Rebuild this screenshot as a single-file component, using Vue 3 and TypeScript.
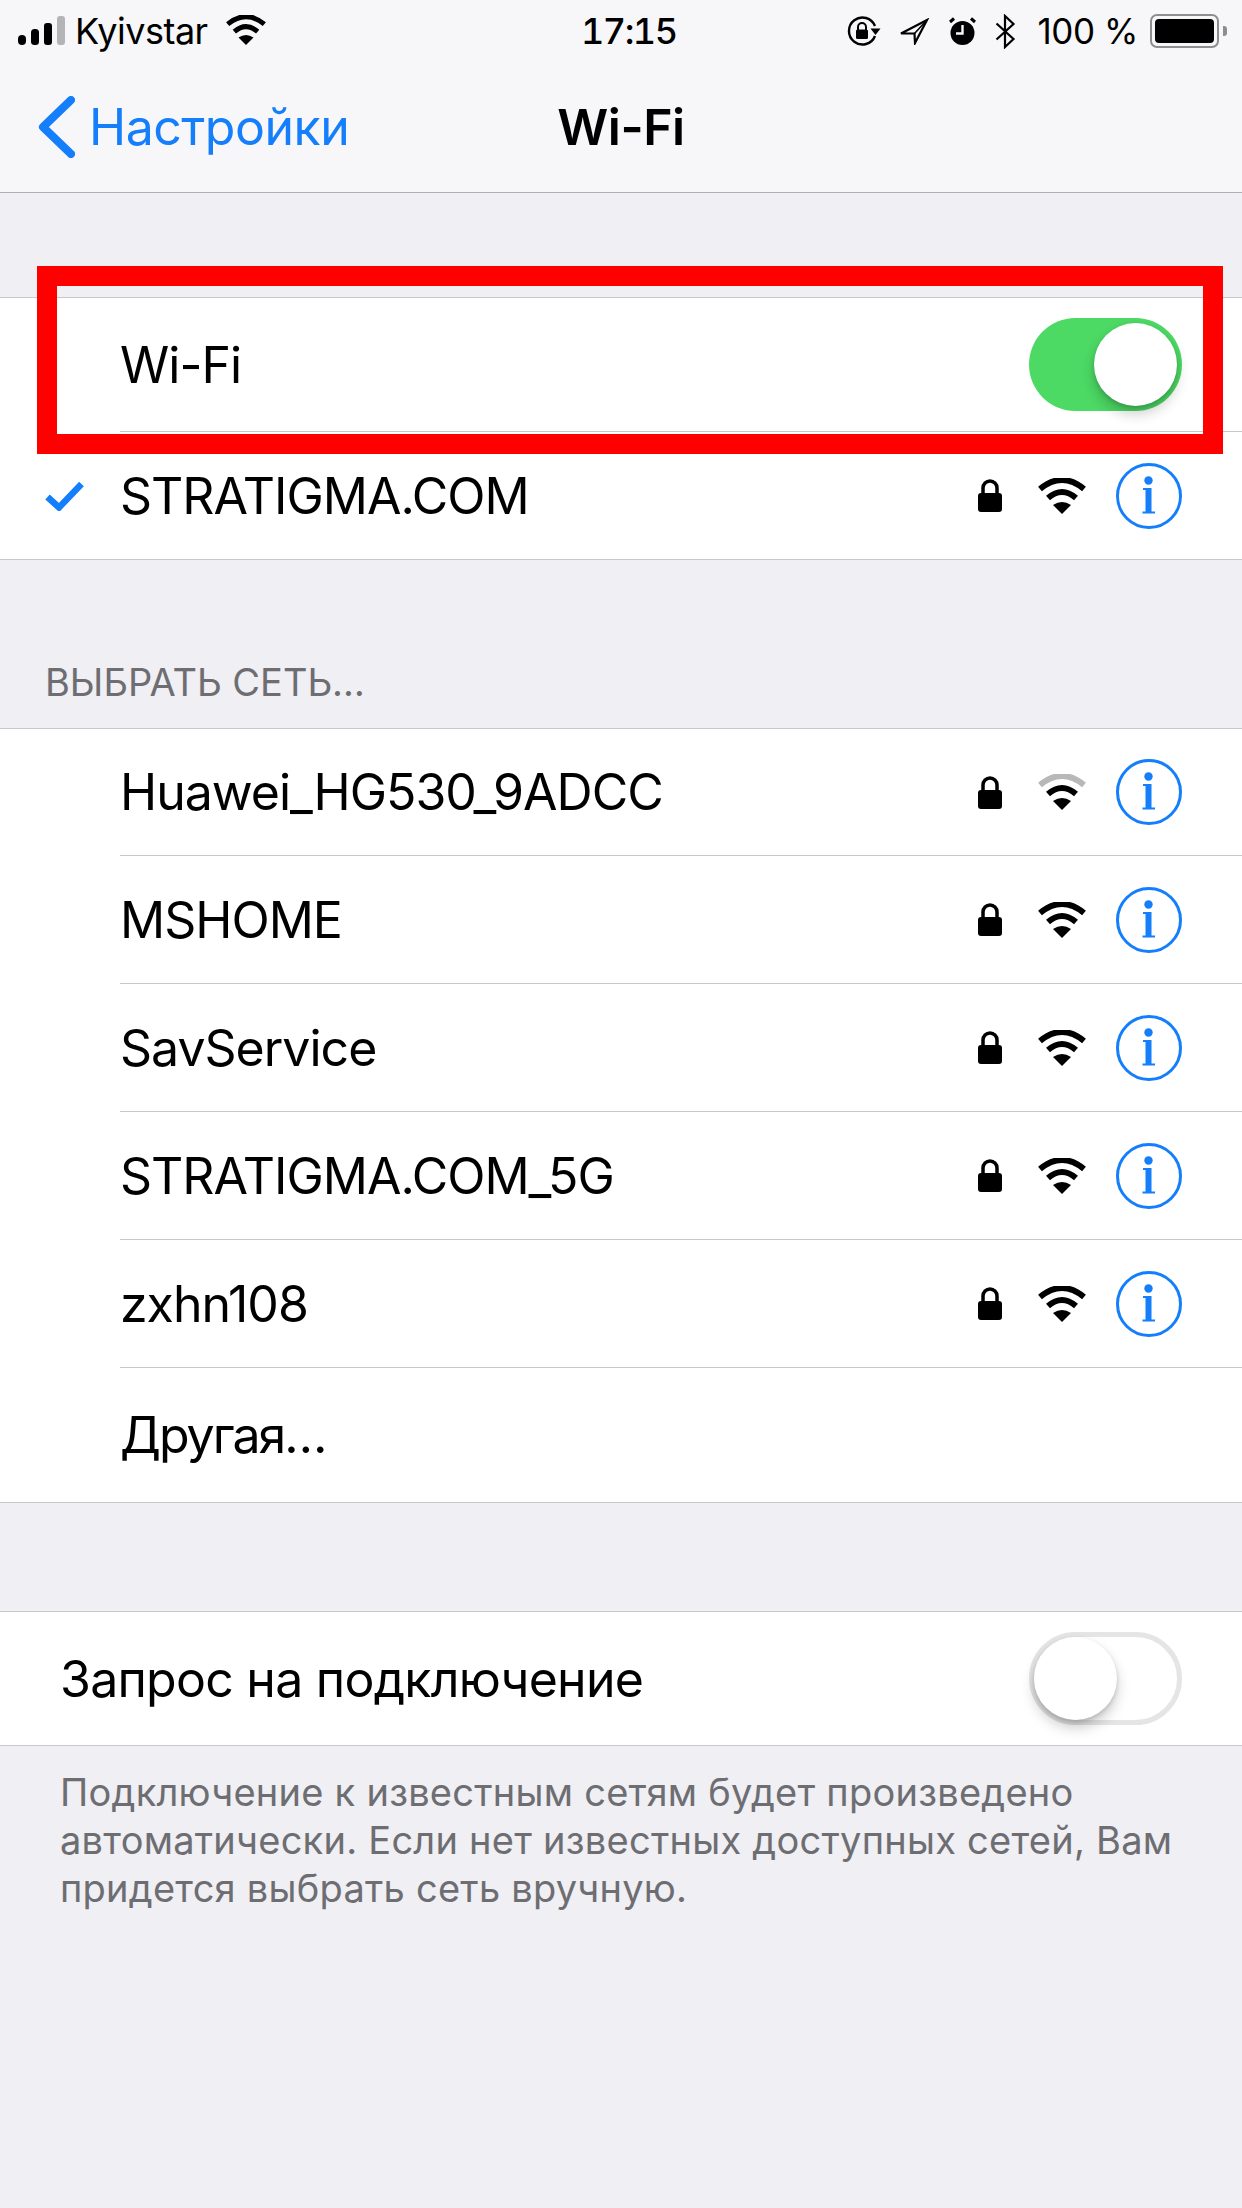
<script setup lang="ts">
interface Network {
  name: string;
  weak?: boolean;
}

const networks: Network[] = [
  { name: "Huawei_HG530_9ADCC", weak: true },
  { name: "MSHOME" },
  { name: "SavService" },
  { name: "STRATIGMA.COM_5G" },
  { name: "zxhn108" },
];
</script>

<template>
  <div class="page">
    <header class="top">
      <div class="status">
        <div class="status-left">
          <svg class="signal" width="47" height="29" viewBox="0 0 47 29">
            <rect x="0" y="19" width="8" height="10" rx="4" fill="#000" />
            <rect x="13" y="13" width="8" height="16" rx="3.5" fill="#000" />
            <rect x="26" y="7" width="8" height="22" rx="3" fill="#000" />
            <rect x="39" y="0" width="8" height="29" rx="3" fill="#b4b4b6" />
          </svg>
          <span class="carrier">Kyivstar</span>
          <svg class="status-wifi" width="42" height="30" viewBox="0 0 48 36">
            <path d="M2 11Q24 -7 46 11" fill="none" stroke="#000" stroke-width="6" />
            <path d="M10 20Q24 8 38 20" fill="none" stroke="#000" stroke-width="6" />
            <path d="M15 27Q24 21 33 27L24 36Z" fill="#000" />
          </svg>
        </div>
        <span class="time">17:15</span>
        <div class="status-right">
          <svg width="35" height="30" viewBox="0 0 35 30">
            <path d="M29 20A13.5 13.5 0 1 1 29 10" fill="none" stroke="#000" stroke-width="2.4" />
            <path d="M24.5 12.5H34.5L29.5 19Z" fill="#000" />
            <path d="M12 14V11a4 4 0 0 1 8 0V14" fill="none" stroke="#000" stroke-width="2" />
            <rect x="10" y="13.5" width="12" height="9.5" rx="1.5" fill="#000" />
          </svg>
          <svg class="location" width="30" height="27" viewBox="0 0 30 27">
            <path d="M28 2L2 15.5L15.5 15.5L16 25Z" fill="none" stroke="#000" stroke-width="2.2" stroke-linejoin="miter" />
            <path d="M28 2L15.5 15.5" fill="none" stroke="#000" stroke-width="1.6" />
          </svg>
          <svg class="alarm" width="27" height="28" viewBox="0 0 27 28">
            <circle cx="13.5" cy="16" r="12" fill="#000" />
            <path d="M13.5 8V16.5H7" fill="none" stroke="#f7f7f9" stroke-width="2.4" />
            <path d="M1 5L5 1.5M26 5L22 1.5" fill="none" stroke="#000" stroke-width="3" />
          </svg>
          <svg class="bluetooth" width="21" height="35" viewBox="0 0 21 35">
            <path d="M1.5 9.5L18.5 25L10 33V2L18.5 10L1.5 25.5" fill="none" stroke="#000" stroke-width="2.2" />
          </svg>
          <span class="battery-text">100 %</span>
          <div class="battery"><div class="battery-fill"></div></div>
          <div class="battery-nub"></div>
        </div>
      </div>
      <nav class="nav">
        <div class="nav-back">
          <svg width="37" height="62" viewBox="0 0 37 62">
            <path d="M33 4L5 31L33 58" fill="none" stroke="#147efb" stroke-width="8" stroke-linecap="round" stroke-linejoin="round" />
          </svg>
          <span>Настройки</span>
        </div>
        <div class="nav-title">Wi-Fi</div>
        <div></div>
      </nav>
    </header>

    <section class="group first-group">
      <div class="row switch-row">
        <div class="lead"></div>
        <div class="body">
          <span class="label tight">Wi-Fi</span>
          <div class="switch on"><div class="knob"></div></div>
        </div>
      </div>
      <div class="row current-row">
        <div class="lead">
          <svg class="check" width="39" height="30" viewBox="0 0 39 30">
            <path d="M2.5 16L14 26.5L36.5 3" fill="none" stroke="#147efb" stroke-width="6.5" />
          </svg>
        </div>
        <div class="body">
          <span class="label tight">STRATIGMA.COM</span>
          <div class="net-icons">
            <svg class="lock" width="24" height="33" viewBox="0 0 24 33">
              <path d="M5 16V9a7 7 0 0 1 14 0V16" fill="none" stroke="#000" stroke-width="3.5" />
              <rect x="0" y="14" width="24" height="19" rx="3" fill="#000" />
            </svg>
            <svg class="wifi" width="48" height="36" viewBox="0 0 48 36">
              <path d="M2 11Q24 -7 46 11" fill="none" stroke="#000" stroke-width="6" />
              <path d="M10 20Q24 8 38 20" fill="none" stroke="#000" stroke-width="6" />
              <path d="M15 27Q24 21 33 27L24 36Z" fill="#000" />
            </svg>
            <svg width="66" height="66" viewBox="0 0 66 66">
              <circle cx="33" cy="33" r="31.5" fill="none" stroke="#147efb" stroke-width="3" />
              <circle cx="32.5" cy="17.5" r="4.2" fill="#147efb" />
              <path d="M27 25H35.5V48.5H39V50.5H26.5V48.5H29.5V27H27Z" fill="#147efb" />
            </svg>
          </div>
        </div>
      </div>
    </section>

    <div class="section-title">ВЫБРАТЬ СЕТЬ…</div>

    <section class="group">
      <div v-for="net in networks" :key="net.name" class="row net-row">
        <div class="lead"></div>
        <div class="body">
          <span class="label tight">{{ net.name }}</span>
          <div class="net-icons">
            <svg class="lock" width="24" height="33" viewBox="0 0 24 33">
              <path d="M5 16V9a7 7 0 0 1 14 0V16" fill="none" stroke="#000" stroke-width="3.5" />
              <rect x="0" y="14" width="24" height="19" rx="3" fill="#000" />
            </svg>
            <svg class="wifi" width="48" height="36" viewBox="0 0 48 36">
              <path d="M2 11Q24 -7 46 11" fill="none" :stroke="net.weak ? '#b8b8b8' : '#000'" stroke-width="6" />
              <path d="M10 20Q24 8 38 20" fill="none" stroke="#000" stroke-width="6" />
              <path d="M15 27Q24 21 33 27L24 36Z" fill="#000" />
            </svg>
            <svg width="66" height="66" viewBox="0 0 66 66">
              <circle cx="33" cy="33" r="31.5" fill="none" stroke="#147efb" stroke-width="3" />
              <circle cx="32.5" cy="17.5" r="4.2" fill="#147efb" />
              <path d="M27 25H35.5V48.5H39V50.5H26.5V48.5H29.5V27H27Z" fill="#147efb" />
            </svg>
          </div>
        </div>
      </div>
      <div class="row other-row">
        <div class="lead"></div>
        <div class="body"><span class="label other">Другая…</span></div>
      </div>
    </section>

    <section class="group ask-group">
      <div class="ask-row">
        <span class="label">Запрос на подключение</span>
        <div class="switch off"><div class="knob"></div></div>
      </div>
    </section>

    <p class="footer">Подключение к известным сетям будет произведено автоматически. Если нет известных доступных сетей, Вам придется выбрать сеть вручную.</p>

    <div class="marker"></div>
  </div>
</template>

<style scoped>
.page {
  position: relative;
  width: 1242px;
  height: 2208px;
  overflow: hidden;
  background: #efeff4;
  color: #000;
  font-family: Inter, "Noto Sans", sans-serif;
}

.top {
  height: 193px;
  box-sizing: border-box;
  background: #f7f7f9;
  border-bottom: 1px solid #b0b0b3;
}

.status {
  height: 62px;
  display: flex;
  align-items: center;
  padding: 0 15px 0 18px;
}

.status-left {
  flex: 0 0 563px;
  display: flex;
  align-items: center;
}

.signal {
  margin-top: -2px;
}

.carrier {
  margin-left: 10px;
  font-size: 36px;
  letter-spacing: -0.5px;
}

.status-wifi {
  margin-left: 17px;
  margin-top: -2px;
}

.time {
  font-size: 36px;
  font-weight: 500;
  font-variant-numeric: tabular-nums;
  letter-spacing: -1.5px;
}

.status-right {
  margin-left: auto;
  display: flex;
  align-items: center;
}

.location {
  margin-left: 18px;
}

.alarm {
  margin-left: 20px;
}

.bluetooth {
  margin-left: 19px;
}

.battery-text {
  margin-left: 21px;
  font-size: 35px;
  letter-spacing: -0.4px;
}

.battery {
  margin-left: 12px;
  box-sizing: border-box;
  width: 69px;
  height: 34px;
  padding: 3px;
  border: 2px solid #8e8e90;
  border-radius: 7px;
}

.battery-fill {
  height: 100%;
  background: #000;
  border-radius: 4px;
}

.battery-nub {
  width: 4px;
  height: 10px;
  margin-left: 4px;
  background: #8e8e90;
  border-radius: 0 3px 3px 0;
}

.nav {
  height: 130px;
  display: grid;
  grid-template-columns: 1fr auto 1fr;
  align-items: center;
  box-sizing: border-box;
}

.nav-back {
  display: flex;
  align-items: center;
  padding-left: 38px;
  color: #147efb;
  font-size: 50px;
}

.nav-back span {
  margin-left: 14px;
  letter-spacing: -0.5px;
}

.nav-title {
  font-size: 50px;
  font-weight: 600;
  letter-spacing: -0.5px;
}

.group {
  background: #fff;
  border-top: 1px solid #c8c7cc;
  border-bottom: 1px solid #c8c7cc;
}

.first-group {
  margin-top: 104px;
}

.row {
  display: flex;
}

.lead {
  flex: 0 0 120px;
  display: flex;
  align-items: center;
}

.check {
  margin-left: 45px;
}

.body {
  flex: 1;
  min-width: 0;
  box-sizing: border-box;
  display: flex;
  align-items: center;
  justify-content: space-between;
  padding: 0 60px 0 0;
  border-bottom: 1px solid #c8c7cc;
}

.row:last-child .body {
  border-bottom: none;
}

.label {
  font-size: 50px;
  letter-spacing: -0.75px;
}

.label.tight {
  letter-spacing: -1px;
}

.label.other {
  letter-spacing: -2px;
}

.switch-row {
  height: 134px;
}

.current-row {
  height: 127px;
}

.net-row {
  height: 128px;
}

.net-row:first-child {
  height: 127px;
}

.other-row {
  height: 134px;
}

.net-icons {
  display: flex;
  align-items: center;
}

.wifi {
  margin: 0 30px 0 36px;
}

.switch {
  position: relative;
  box-sizing: border-box;
  width: 153px;
  height: 93px;
  border-radius: 47px;
}

.switch.on {
  background: #4cd964;
}

.switch.off {
  border: 5px solid #e5e5e5;
  background: #fff;
}

.knob {
  position: absolute;
  top: 5px;
  right: 5px;
  width: 83px;
  height: 83px;
  border-radius: 50%;
  background: #fff;
  box-shadow: 0 8px 14px rgba(0, 0, 0, 0.2), 0 2px 4px rgba(0, 0, 0, 0.15);
}

.switch.off .knob {
  top: 0;
  right: auto;
  left: 0;
}

.section-title {
  box-sizing: border-box;
  height: 168px;
  padding: 100px 0 0 45px;
  font-size: 38px;
  line-height: 44px;
  color: #6d6d72;
}

.ask-group {
  margin-top: 108px;
}

.ask-row {
  height: 133px;
  display: flex;
  align-items: center;
  justify-content: space-between;
  padding: 0 60px;
}

.footer {
  margin: 0;
  padding: 22px 60px 0;
  font-size: 38px;
  line-height: 48px;
  letter-spacing: 0.25px;
  color: #6d6d72;
}

.marker {
  position: absolute;
  left: 37px;
  top: 266px;
  width: 1186px;
  height: 188px;
  box-sizing: border-box;
  border: 20px solid #ff0000;
}
</style>
